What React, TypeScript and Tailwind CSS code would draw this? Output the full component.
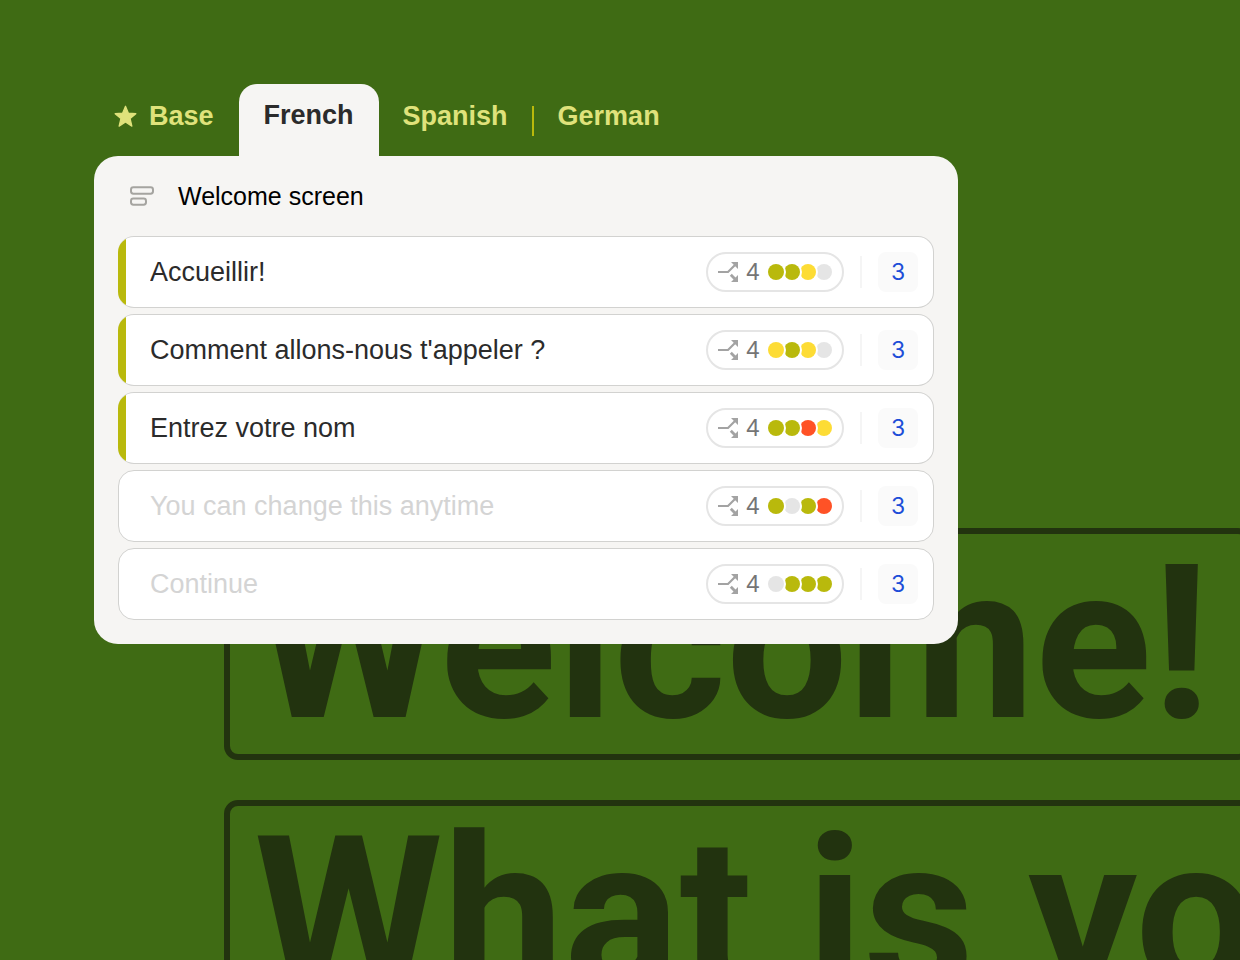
const BAR_COLORS = {
  good: 'bg-[#b9b90c]',
  fair: 'bg-[#fddc35]',
  poor: 'bg-[#ff5226]',
  none: 'bg-[#e5e5e5]',
}

type Status = keyof typeof BAR_COLORS

type Row = {
  id: string
  source: string
  value: string
  statuses: Status[]
}

const rows: Row[] = [
  { id: 'welcome', source: 'Welcome!', value: 'Accueillir!', statuses: ['good', 'good', 'fair', 'none'] },
  { id: 'name-question', source: 'What is your name?', value: "Comment allons-nous t'appeler ?", statuses: ['fair', 'good', 'fair', 'none'] },
  { id: 'name-input', source: 'Enter your name', value: 'Entrez votre nom', statuses: ['good', 'good', 'poor', 'fair'] },
  { id: 'hint', source: 'You can change this anytime', value: '', statuses: ['good', 'none', 'good', 'poor'] },
  { id: 'continue', source: 'Continue', value: '', statuses: ['none', 'good', 'good', 'good'] },
]

// earlier dots sit on top of later ones
const dotLayers = ['z-40', 'z-30', 'z-20', 'z-10']

function StarIcon() {
  return (
    <svg viewBox="0 0 22 22" className="size-[23px]" fill="currentColor" stroke="currentColor" strokeWidth="1.2" strokeLinejoin="round" aria-hidden="true">
      <path d="M11 1.2l2.7 6.5 7.2.6-5.5 4.7 1.7 7.2-6.1-3.9-6.1 3.9 1.7-7.2-5.5-4.7 7.2-.6z" />
    </svg>
  )
}

function BlocksIcon() {
  return (
    <svg viewBox="0 0 24 20" className="h-5 w-6 text-[#a5a4a0]" fill="none" stroke="currentColor" strokeWidth="2" aria-hidden="true">
      <rect x="1" y="1.3" width="22" height="6.4" rx="2.4" />
      <rect x="1" y="12.5" width="15" height="6.2" rx="2.4" />
    </svg>
  )
}

function BranchIcon() {
  return (
    <svg viewBox="0 0 20 20" className="size-5 text-[#a3a3a3]" fill="none" stroke="currentColor" aria-hidden="true">
      <path d="M0 10h10l7-7" strokeWidth="2.2" />
      <path d="M12.8 12.8l4.2 4.2" strokeWidth="2.8" />
      <path d="M13 0h7v7zM20 13v7h-7z" fill="currentColor" stroke="none" />
    </svg>
  )
}

function Tabs() {
  return (
    <div role="tablist" aria-label="Languages" className="flex h-[72px] items-stretch pl-5 text-[27px] font-bold text-[#dfe27b]">
      <button role="tab" aria-selected="false" className="flex items-center gap-3 pr-[25px] pb-2">
        <StarIcon />
        Base
      </button>
      <button role="tab" aria-selected="true" className="w-[140px] rounded-t-[18px] bg-[#f6f5f3] pb-2.5 text-[#2b2b2b]">
        French
      </button>
      <button role="tab" aria-selected="false" className="px-6 pb-2">
        Spanish
      </button>
      <span className="mt-0.5 h-[30px] w-0.5 self-center bg-[#b9b90c]" aria-hidden="true" />
      <button role="tab" aria-selected="false" className="px-6 pb-2">
        German
      </button>
    </div>
  )
}

function StatusPill({ statuses }: { statuses: Status[] }) {
  return (
    <div className="flex h-10 shrink-0 items-center rounded-full border-2 border-[#e5e5e5] px-2.5">
      <BranchIcon />
      <span className="w-[30px] text-center text-2xl text-[#757575]">{statuses.length}</span>
      <span className="isolate flex">
        {statuses.map((status, index) => (
          <span
            key={index}
            className={`relative size-4 rounded-full ring-2 ring-white ${dotLayers[index]} ${BAR_COLORS[status]}`}
          />
        ))}
      </span>
    </div>
  )
}

function TranslationRow({ row }: { row: Row }) {
  const translated = row.value !== ''
  return (
    <li
      className={`flex h-[72px] items-center overflow-hidden rounded-2xl border border-[#d2d2d0] bg-white pr-[15px] ${
        translated ? 'border-l-0' : 'pl-[7px]'
      }`}
    >
      {translated && <span className="w-2 shrink-0 self-stretch bg-[#b9b90c]" />}
      <input
        type="text"
        aria-label={`French for ${row.source}`}
        defaultValue={row.value}
        placeholder={row.source}
        className="h-full min-w-0 flex-1 bg-transparent px-6 text-[27px] text-[#2b2b2b] outline-none placeholder:text-[#d4d4d4]"
      />
      <div className="flex items-center gap-4">
        <StatusPill statuses={row.statuses} />
        <span className="h-8 w-0.5 bg-[#f5f5f5]" />
        <button className="size-10 rounded-lg bg-[#fafafa] font-[Inter,sans-serif] text-[23px] text-[#1d4ed8]">3</button>
      </div>
    </li>
  )
}

function Backdrop() {
  return (
    <div
      aria-hidden="true"
      className="flex flex-col gap-10 pt-[528px] pl-[224px] font-[Roboto,sans-serif] text-[216px] leading-[220px] font-bold whitespace-nowrap text-[#22330f] [grid-area:1/1]"
    >
      <div className="-mr-3 rounded-[14px] border-6 border-[#22330f] px-6">Welcome!</div>
      <div className="-mr-20 rounded-[14px] border-6 border-[#22330f] px-6">What is your name?</div>
    </div>
  )
}

export default function App() {
  return (
    <main className="grid h-screen grid-cols-[minmax(0,1fr)] items-start overflow-hidden bg-[#3f6b14] font-['Liberation_Sans',Arial,sans-serif]">
      <Backdrop />
      <div className="isolate w-full px-[94px] pt-[84px] [grid-area:1/1]">
        <div className="max-w-[864px]">
          <Tabs />
          <section className="rounded-3xl bg-[#f6f5f3] px-6 pb-6">
            <header className="flex h-20 items-center gap-6 px-3">
              <BlocksIcon />
              <h1 className="pt-0.5 text-[25px] text-black">Welcome screen</h1>
            </header>
            <ul className="flex flex-col gap-1.5">
              {rows.map((row) => (
                <TranslationRow key={row.id} row={row} />
              ))}
            </ul>
          </section>
        </div>
      </div>
    </main>
  )
}
